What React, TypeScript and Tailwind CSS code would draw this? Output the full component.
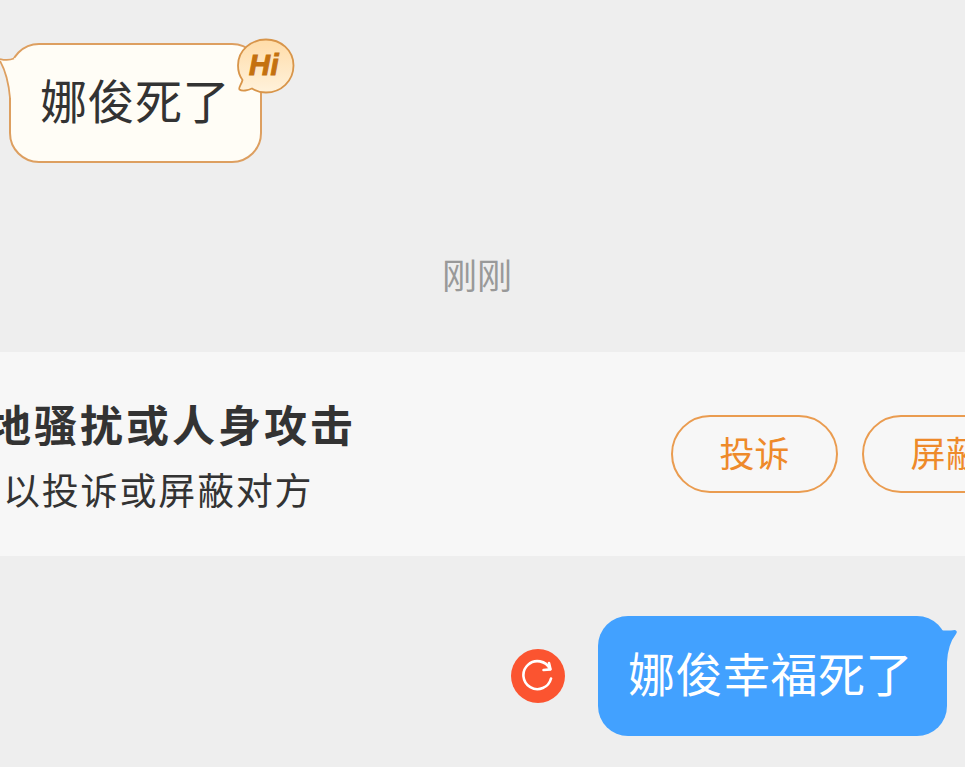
import React from "react";

const cjk = "font-['Noto_Sans_CJK_SC','Noto_Sans',sans-serif]";

export default function App() {
  return (
    <div className={`relative h-[767px] w-[965px] overflow-hidden bg-[#eeeeee] ${cjk}`}>
      <div className="flex flex-col">
        {/* incoming */}
        <div className="pl-[9px] pt-[43px]">
          <div className="relative flex h-[120px] w-[253px] items-center rounded-[30px] border-2 border-[#dd9f60] bg-[#fffdf6] pb-[10px] pl-[29px] text-[47px] leading-none tracking-[0.5px] text-[#333333]">
            娜俊死了
            <svg className="absolute left-[-11px] top-[8px]" width="26" height="50" viewBox="0 0 26 50">
              <path d="M0 6 Q8 8 15 5 L22 45 L10 45 Q8 22 0 8Z" fill="#fffdf6" />
              <path d="M0 6 Q8 8 14 5.5" fill="none" stroke="#dd9f60" strokeWidth="1.8" />
              <path d="M0 8 Q8 22 10 45" fill="none" stroke="#dd9f60" strokeWidth="1.8" />
            </svg>
            <div className="absolute left-[225px] top-[-7px] h-[56px] w-[60px]">
              <svg width="60" height="56" viewBox="0 0 60 56" className="absolute inset-0">
                <defs>
                  <linearGradient id="hi" x1="0.5" y1="0" x2="0.5" y2="1">
                    <stop offset="0" stopColor="#ffdca8" />
                    <stop offset="1" stopColor="#fff2dc" />
                  </linearGradient>
                </defs>
                <path
                  d="M30 1.5 C44.5 1.5 57.5 12 57.5 27.5 C57.5 43 45 54.5 30 54.5 C24 54.5 19 52.5 16 50.5 C12 52.5 6 53.5 3.5 51.5 C2 50 5.5 46.5 6.5 42 C3.5 38 2 33 2 27.5 C2 12 15.5 1.5 30 1.5Z"
                  fill="url(#hi)"
                  stroke="#d8954a"
                  strokeWidth="1.8"
                />
              </svg>
              <span className="absolute left-[13px] top-[13px] font-['Liberation_Sans',sans-serif] text-[29px] font-bold italic leading-[29px] text-[#c4710f] [-webkit-text-stroke:1px_#c4710f]">
                Hi
              </span>
            </div>
          </div>
        </div>

        {/* timestamp */}
        <div className="mt-[91px] pr-[11px] text-center text-[35px] leading-[40px] text-[#999999]">刚刚</div>

        {/* notice */}
        <div className="mt-[58px] flex h-[204px] items-center bg-[#f7f7f7]">
          <div className="ml-[-12px] flex w-[683px] shrink-0 flex-col">
            <div className="whitespace-nowrap text-[43px] font-bold leading-[56px] tracking-[3px] text-[#333333]">
              地骚扰或人身攻击
            </div>
            <div className="ml-[15px] mt-[14px] whitespace-nowrap text-[37px] leading-[48px] tracking-[1.8px] text-[#333333]">
              以投诉或屏蔽对方
            </div>
          </div>
          <div className="flex gap-[24px]">
            <div className="flex h-[78px] w-[167px] shrink-0 items-center justify-center rounded-[39px] border-2 border-[#ea9c50] pb-[3px] text-[35px] text-[#ee8a2a]">
              投诉
            </div>
            <div className="flex h-[78px] w-[167px] shrink-0 items-center justify-center rounded-[39px] border-2 border-[#ea9c50] pb-[3px] text-[35px] text-[#ee8a2a]">
              屏蔽
            </div>
          </div>
        </div>

        {/* outgoing */}
        <div className="mt-[60px] flex items-center pl-[511px]">
          <div className="flex h-[54px] w-[54px] items-center justify-center rounded-full bg-[#fb5430]">
            <svg width="34" height="34" viewBox="0 0 34 34" fill="none" stroke="#ffffff" strokeWidth="2.6" strokeLinecap="round" strokeLinejoin="round">
              <path d="M30 19.5 A14 14 0 1 1 29 10" />
              <path d="M28 4 L29.5 10.4 L22.5 11" />
            </svg>
          </div>
          <div className="relative ml-[33px] flex h-[120px] w-[349px] items-center rounded-[30px] bg-[#42a1ff] pb-[9px] pl-[30px] text-[47px] leading-none tracking-[0.5px] text-white">
            娜俊幸福死了
            <svg className="absolute left-[335px] top-[8px]" width="26" height="40" viewBox="0 0 26 40">
              <path d="M0 0 L7 6 Q14 7 22 6 Q25 7 23 10 Q15 20 14 38 L0 38Z" fill="#42a1ff" />
            </svg>
          </div>
        </div>
      </div>
    </div>
  );
}
